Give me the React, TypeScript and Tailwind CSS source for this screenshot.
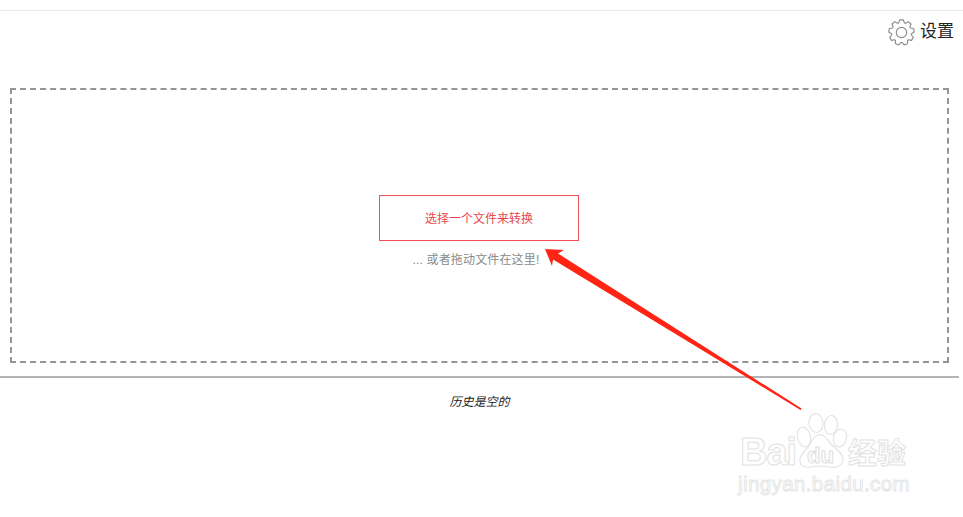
import React from 'react';

const CJK = "font-['Liberation_Sans','Noto_Sans_CJK_SC',sans-serif]";

function Gear() {
  const teeth = 9;
  const pts: string[] = [];
  for (let i = 0; i < teeth; i++) {
    const a = (i / teeth) * Math.PI * 2 - Math.PI / 2;
    const w = Math.PI / teeth;
    const p = (r: number, t: number) => `${(13 + r * Math.cos(t)).toFixed(2)},${(13 + r * Math.sin(t)).toFixed(2)}`;
    pts.push(p(9.6, a - w * 0.85), p(12.3, a - w * 0.4), p(12.3, a + w * 0.4), p(9.6, a + w * 0.85));
  }
  return (
    <svg width="27" height="27" viewBox="0 0 26 26" fill="none" stroke="#8c8c8c" strokeWidth="1.1" strokeLinejoin="round">
      <polygon points={pts.join(' ')} />
      <circle cx="13" cy="13" r="5" />
    </svg>
  );
}

function Arrow() {
  return (
    <svg className="absolute left-0 top-0 pointer-events-none" width="963" height="517" viewBox="0 0 963 517">
      <polygon points="545,249 564,250 558,253.5 801.5,408.5 800.5,410 553,259.5 552,266" fill="#ff2414" />
    </svg>
  );
}

function Watermark() {
  return (
    <div className="absolute left-[738px] top-[410px] w-[180px] h-[90px] pointer-events-none text-transparent font-['Liberation_Sans','Noto_Sans_CJK_SC',sans-serif]">
      <svg className="absolute left-[59px] top-[3px]" width="52" height="58" viewBox="0 0 52 58" fill="#fff" stroke="#e4e4e4" strokeWidth="1.2">
        <ellipse cx="7" cy="24" rx="6.5" ry="10" transform="rotate(-12 7 24)" />
        <ellipse cx="19" cy="10" rx="7" ry="9.5" transform="rotate(-6 19 10)" />
        <ellipse cx="34" cy="12" rx="6.5" ry="9.5" transform="rotate(6 34 12)" />
        <ellipse cx="43" cy="25" rx="6.5" ry="9" transform="rotate(14 43 25)" />
        <path d="M21 22C26 20 30 26 34 31C39 36 47 41 46 47C45 54 38 55 32 54C27 53 20 53 14 54C8 55 2 53 3 46C4 40 10 37 13 31C15 27 17 23 21 22z" />
      </svg>
      <span className="absolute left-[2px] top-[20px] text-[38px] leading-[44px] font-bold tracking-[-1px] [-webkit-text-stroke:1px_#e2e2e2]">Bai</span>
      <span className="absolute left-[69px] top-[34px] text-[22px] leading-[24px] font-bold [-webkit-text-stroke:1px_#dedede]">du</span>
      <span className="absolute left-[110px] top-[26px] text-[29px] leading-[36px] font-bold [-webkit-text-stroke:1px_#e2e2e2]">经验</span>
      <span className="absolute left-0 top-[62px] text-[20.5px] leading-[24px] tracking-[0.4px] [-webkit-text-stroke:1px_#e6e6e6]">jingyan.baidu.com</span>
    </div>
  );
}

export default function App() {
  return (
    <div className={`relative w-[963px] h-[517px] overflow-hidden bg-white ${CJK}`}>
      <div className="pt-[10px]">
        <div className="h-px bg-[#e8e8e8]" />
      </div>

      {/* settings link */}
      <div className="flex justify-end items-center gap-[5px] pr-[9px] pt-[2px] h-[40px]">
        <Gear />
        <span className="text-[17px] leading-[24px] text-[#222]">设置</span>
      </div>

      {/* drop area */}
      <div className="ml-[10px] mt-[37px] w-[939px] h-[275px] border-2 border-dashed border-[#959595] flex flex-col items-center pt-[105px] pr-[1px]">
        <button className="w-[200px] h-[46px] border border-[#ec5257] pt-[1px] text-[12px] text-[#e8474c]">选择一个文件来转换</button>
        <p className="mt-[11px] mr-[6px] text-[12px] leading-[16px] tracking-[0.15px] text-[#8a8a8a]">... 或者拖动文件在这里!</p>
      </div>

      <div className="mt-[13px] w-[959px] h-[2px] bg-[#b4b4b4]" />
      <p className="mt-[16px] text-center text-[12px] leading-[16px] italic text-[#222] w-[959px]">历史是空的</p>

      <Arrow />
      <Watermark />
    </div>
  );
}
